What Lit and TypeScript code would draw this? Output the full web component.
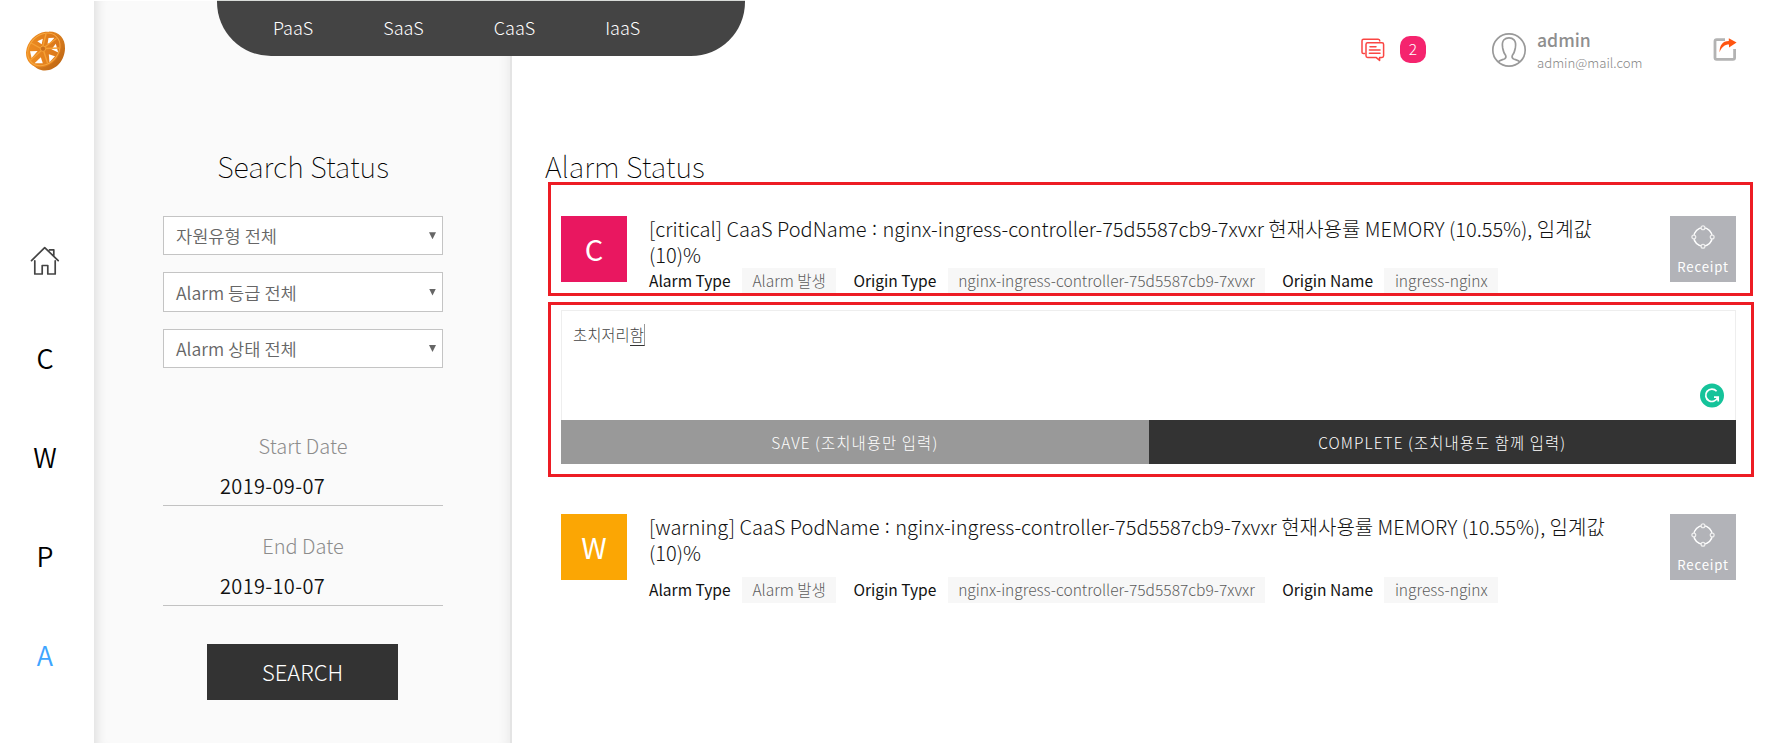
import { LitElement, html, css, svg } from "lit";
import { customElement } from "lit/decorators.js";
import { classMap } from "lit/directives/class-map.js";

const logo = svg`
  <svg width="42" height="42" viewBox="0 0 42 42">
    <defs>
      <linearGradient id="rim" x1="0" y1="0" x2="1" y2="1">
        <stop offset="0" stop-color="#f59a2c" />
        <stop offset="1" stop-color="#b85f10" />
      </linearGradient>
      <linearGradient id="face" x1="0" y1="0" x2="1" y2="0.6">
        <stop offset="0" stop-color="#f39222" />
        <stop offset="1" stop-color="#d9761b" />
      </linearGradient>
    </defs>
    <path d="M24 1.600C34 1.400 40.300 8.500 40 18.500C39.700 30 31.500 40.300 20 40.500C14.500 40.500 10.500 38 6.500 33.500L22 4Z" fill="url(#rim)" />
    <ellipse cx="18.700" cy="19.500" rx="19.500" ry="15.800" transform="rotate(-46 18.700 19.500)" fill="url(#face)" />
    <ellipse cx="18.900" cy="19.400" rx="17.900" ry="14.300" transform="rotate(-46 18.900 19.400)" fill="none" stroke="#f7a840" stroke-width="1" />
    <g fill="#fff">
      <path d="M12.300 11.200L17.800 8.800L16.700 14.300Z" />
      <path d="M23.500 8L29.500 7.800L24.600 13.300L22.600 13.800Z" />
      <path d="M30.800 13.800L33.200 22.500L26.500 19.300Z" />
      <path d="M23.800 24.300L30 26.200L24.500 32.300Z" />
      <path d="M15.800 27.300L17.800 33.300L9.500 33.300Z" />
      <path d="M5 21.200L12.600 21L6.600 28Z" />
    </g>
    <path d="M17.500 17.500L21 4M19 17.500L31.500 8.500M20 18.500L34 18M18.500 20.500L22.500 33M17 20L4.500 31M16 18.500L6 13" stroke="#f5a036" stroke-width="1.400" fill="none" />
    <circle cx="18" cy="18.700" r="2.700" fill="#c9701c" stroke="#f5a036" stroke-width="1" />
  </svg>`;

const house = svg`
  <svg width="30" height="30" viewBox="0 0 30 30" fill="none" stroke="#444" stroke-width="1.700" stroke-linecap="round" stroke-linejoin="round">
    <path d="M1.500 14.600L14.700 1.600L28.200 14.600M19.500 3.800H23.800V9.400M4.800 14.800V28H12.200V19.500H17.800V28H25.200V14.800" />
  </svg>`;

const messages = svg`
  <svg width="24" height="25" viewBox="0 0 24 25" fill="none" stroke="#fa4643" stroke-width="1.500" stroke-linejoin="round" stroke-linecap="round">
    <path d="M3.600 15.600H2.400Q1 15.600 1 14.200V2.800Q1 1.200 2.600 1.200H17.200Q18.800 1.200 18.800 3" />
    <path d="M6.600 4.800H21Q22.600 4.800 22.600 6.400V17.800Q22.600 19.400 21 19.400H18.600V22.400L15 19.400H6.600Q5 19.400 5 17.800V6.400Q5 4.800 6.600 4.800Z" />
    <path d="M9 8.800H15M8.400 12H19M8.400 15.200H19" />
  </svg>`;

const avatar = svg`
  <svg width="36" height="36" viewBox="0 0 36 36" fill="none" stroke="#999" stroke-width="1.700" stroke-linejoin="round">
    <circle cx="18" cy="18" r="16.200" />
    <path d="M7.200 29.800C8.800 28 12.800 27.600 14 26.600C15.200 25.600 14.900 23.800 14.400 22.800C12.600 21.400 12.200 18.200 11.700 16C11 12.500 11.400 9.600 13 7.800C15.400 5.200 20.600 5.200 23 7.800C24.600 9.600 25 12.500 24.300 16C23.800 18.200 23.400 21.400 21.600 22.800C21.100 23.800 20.800 25.600 22 26.600C23.200 27.600 27.200 28 28.800 29.800" />
  </svg>`;

const share = svg`
  <svg width="24" height="25" viewBox="0 0 24 25">
    <path d="M12 2.700H3.600Q2 2.700 2 4.300V20.800Q2 22.400 3.600 22.400H20Q21.600 22.400 21.600 20.800V12" fill="none" stroke="#b3b3b3" stroke-width="2.800" />
    <path d="M15.800 1.200L23.600 5.600L16 10.600V7.600C11.600 7.600 8.700 10.200 6.600 15.200C6.400 8.500 9.500 4 15.800 3.900Z" fill="#ff5410" />
  </svg>`;

const ring = svg`
  <svg width="24" height="24" viewBox="0 0 24 24" fill="none" stroke="#fff">
    <circle cx="12" cy="12" r="9.200" stroke-width="1.500" />
    <g stroke="#eee" stroke-width="1.300" fill="#b2b3b8">
      <circle cx="12" cy="2.800" r="1.900" /><circle cx="21.200" cy="12" r="1.900" />
      <circle cx="12" cy="21.200" r="1.900" /><circle cx="2.800" cy="12" r="1.900" />
    </g>
  </svg>`;

const assistant = svg`
  <svg width="24" height="25" viewBox="0 0 24 25">
    <circle cx="12" cy="12.500" r="12" fill="#15c39a" />
    <path d="M16.600 8.200A6.200 6.200 0 1 0 17.800 14.300M14 14.200H18.200V18.600" fill="none" stroke="#fff" stroke-width="1.700" />
  </svg>`;

interface Alarm {
  letter: string;
  level: string;
}

@customElement("app-root")
export class AppRoot extends LitElement {
  static styles = css`
    :host {
      display: flex;
      position: relative;
      width: 1773px;
      height: 743px;
      overflow: hidden;
      background: #fff;
      color: #111;
      font-family: "Noto Sans CJK KR", "Noto Sans", sans-serif;
      font-weight: 300;
    }
    * { box-sizing: border-box; }
    svg { display: block; }
    h2 {
      margin: 0;
      font-size: 28.800px;
      font-weight: 100;
      line-height: 40px;
      color: #000;
    }
    .rail {
      width: 94px;
      display: flex;
      flex-direction: column;
      align-items: center;
      padding: 30px 4px 0 0;
    }
    .rail > svg { margin-left: 1px; }
    .home { margin-top: 174px; }
    .rail nav {
      display: flex;
      flex-direction: column;
      align-items: center;
      margin-top: 62px;
      gap: 59px;
    }
    .rail a {
      font-size: 27px;
      line-height: 40px;
      font-weight: 350;
      color: #000;
    }
    .rail .current { color: #3ea5ff; }
    .panel {
      width: 418px;
      margin-top: 1px;
      padding: 145px 67px 0 69px;
      background: #fafafa;
      border-right: 2px solid #e4e4e4;
      box-shadow: inset 12px 0 11px -9px rgba(0, 0, 0, 0.11), inset -12px 0 11px -9px rgba(0, 0, 0, 0.06);
      display: flex;
      flex-direction: column;
      align-items: stretch;
      text-align: center;
    }
    .selects {
      display: flex;
      flex-direction: column;
      gap: 17px;
      margin-top: 30px;
    }
    .select {
      height: 39.400px;
      display: flex;
      align-items: center;
      justify-content: space-between;
      padding: 0 6px 0 12px;
      border: 1px solid #c4c4c4;
      background: #fff;
      color: #666;
      font-size: 17.600px;
      font-weight: 350;
    }
    .arrow {
      width: 7px;
      height: 7px;
      background: #666;
      clip-path: polygon(0 0, 100% 0, 50% 100%);
    }
    .dates { margin-top: 62px; }
    .label {
      font-size: 20px;
      line-height: 32px;
      color: #8c8c8c;
    }
    .date {
      height: 44px;
      padding: 9px 0 0 57px;
      margin-bottom: 23.500px;
      text-align: left;
      font-size: 20px;
      line-height: 30px;
      font-weight: 350;
      letter-spacing: 0.350px;
      border-bottom: 1px solid #c2c2c2;
    }
    .search {
      align-self: center;
      width: 191px;
      height: 56px;
      margin: 15px 1px 0 0;
      background: #333;
      color: #fff;
      font-size: 22px;
      line-height: 55px;
    }
    .tabs {
      position: absolute;
      left: 217px;
      top: 0;
      width: 528px;
      height: 56px;
      display: flex;
      gap: 70px;
      padding: 0 0 0 56px;
      border-top: 1px solid #d9dcd9;
      background: #444;
      border-radius: 0 0 54px 54px;
      color: #fff;
      font-size: 18px;
      line-height: 52px;
    }
    .main {
      flex: 1;
      min-width: 0;
      padding: 0 37px 0 49px;
      display: flex;
      flex-direction: column;
    }
    .top {
      height: 146px;
      margin-right: -1px;
      display: flex;
      justify-content: flex-end;
      align-items: flex-start;
      padding-top: 31px;
    }
    .messages { margin-top: 7px; }
    .count {
      width: 26px;
      height: 27px;
      margin: 5px 65px 0 15px;
      border-radius: 10px;
      background: #f5246e;
      color: #fff;
      font-size: 15.500px;
      line-height: 25px;
      text-align: center;
    }
    .user {
      display: flex;
      gap: 10px;
      width: 222px;
      color: #888;
    }
    .user svg { margin-top: 1px; }
    .name {
      font-size: 17.600px;
      line-height: 20px;
      font-weight: 500;
      margin-top: -1px;
      color: #8f8f8f;
    }
    .mail {
      font-size: 13.200px;
      line-height: 22px;
      margin-top: 2px;
    }
    .share { margin-top: 6px; }
    .heading { margin-left: -16px; }
    .alarm {
      display: flex;
      margin-top: 28px;
    }
    .heading + .alarm { margin-top: 30px; }
    .badge {
      width: 66px;
      height: 66px;
      margin-right: 22px;
      color: #fff;
      font-size: 29px;
      font-weight: 400;
      line-height: 64px;
      text-align: center;
      background: #e91760;
    }
    .warning .badge { background: #fba604; }
    .text { width: 982px; }
    .title {
      font-size: 20px;
      line-height: 26px;
    }
    .colon {
      margin: 0 1px;
      line-height: 0;
      vertical-align: 2px;
    }
    .tags {
      display: flex;
      align-items: center;
      font-size: 15.550px;
      line-height: 24px;
      white-space: nowrap;
    }
    .warning .tags { margin-top: 11px; }
    .key {
      font-weight: 400;
      padding-bottom: 2px;
    }
    .value {
      background: #f7f7f7;
      color: #5c5c5c;
      margin: 0 17px 0 11.300px;
      padding: 0 10.500px 2px;
    }
    .receipt {
      margin-left: auto;
      width: 66px;
      height: 66px;
      padding-top: 9px;
      display: flex;
      flex-direction: column;
      align-items: center;
      gap: 8px;
      background: #b2b3b8;
      color: #fff;
      font-size: 13.200px;
      line-height: 20px;
      font-weight: 400;
      letter-spacing: 0.800px;
    }
    .editor {
      display: flex;
      flex-direction: column;
      margin-top: 16px;
      margin-bottom: 22px;
    }
    .area {
      height: 110px;
      display: flex;
      justify-content: space-between;
      border: 1.500px solid #eee;
      border-bottom: 0;
      padding: 11px 11px 0 11px;
      font-size: 15.400px;
      line-height: 25px;
      color: #444;
    }
    .composing {
      display: inline-block;
      line-height: 21px;
      border-bottom: 1px solid #333;
      border-right: 1px solid #999;
    }
    .area svg { margin-top: 61px; }
    .actions {
      display: grid;
      grid-template-columns: 1fr 1fr;
      text-align: center;
      font-size: 15.400px;
      line-height: 44px;
      letter-spacing: 1.100px;
      color: #fff;
    }
    .save { background: #999; }
    .complete { background: #333; }
    .mark {
      position: absolute;
      left: 548px;
      border: 3px solid #ed1c24;
      pointer-events: none;
    }
    .mark-alarm { top: 182px; width: 1205px; height: 114px; }
    .mark-editor { top: 302px; width: 1206px; height: 175px; }
  `;

  private alarms: Alarm[] = [
    { letter: "C", level: "critical" },
    { letter: "W", level: "warning" },
  ];

  private pod = "nginx-ingress-controller-75d5587cb9-7xvxr";

  private renderAlarm(a: Alarm) {
    return html`
      <article class=${classMap({ alarm: true, [a.level]: true })}>
        <div class="badge">${a.letter}</div>
        <div class="text">
          <div class="title">[${a.level}] CaaS PodName <span class="colon">:</span> ${this.pod} 현재사용률 MEMORY (10.55%), 임계값 (10)%</div>
          <div class="tags">
            <span class="key">Alarm Type</span><span class="value">Alarm 발생</span>
            <span class="key">Origin Type</span><span class="value">${this.pod}</span>
            <span class="key">Origin Name</span><span class="value">ingress-nginx</span>
          </div>
        </div>
        <div class="receipt">${ring}<span>Receipt</span></div>
      </article>`;
  }

  render() {
    return html`
      <aside class="rail">
        ${logo}
        <div class="home">${house}</div>
        <nav>
          ${["C", "W", "P", "A"].map((l) => html`<a class=${classMap({ current: l === "A" })}>${l}</a>`)}
        </nav>
      </aside>
      <section class="panel">
        <h2>Search Status</h2>
        <div class="selects">
          ${["자원유형 전체", "Alarm 등급 전체", "Alarm 상태 전체"].map(
            (s) => html`<div class="select"><span>${s}</span><i class="arrow"></i></div>`
          )}
        </div>
        <div class="dates">
          <div class="label">Start Date</div>
          <div class="date">2019-09-07</div>
          <div class="label">End Date</div>
          <div class="date">2019-10-07</div>
        </div>
        <div class="search">SEARCH</div>
      </section>
      <main class="main">
        <header class="top">
          <div class="messages">${messages}</div>
          <div class="count">2</div>
          <div class="user">
            ${avatar}
            <div>
              <div class="name">admin</div>
              <div class="mail">admin@mail.com</div>
            </div>
          </div>
          <div class="share">${share}</div>
        </header>
        <h2 class="heading">Alarm Status</h2>
        ${this.renderAlarm(this.alarms[0])}
        <div class="editor">
          <div class="area">
            <div>초치저리<span class="composing">함</span></div>
            ${assistant}
          </div>
          <div class="actions">
            <div class="save">SAVE (조치내용만 입력)</div>
            <div class="complete">COMPLETE (조치내용도 함께 입력)</div>
          </div>
        </div>
        ${this.renderAlarm(this.alarms[1])}
      </main>
      <nav class="tabs">${["PaaS", "SaaS", "CaaS", "IaaS"].map((t) => html`<span>${t}</span>`)}</nav>
      <div class="mark mark-alarm"></div>
      <div class="mark mark-editor"></div>
    `;
  }
}
